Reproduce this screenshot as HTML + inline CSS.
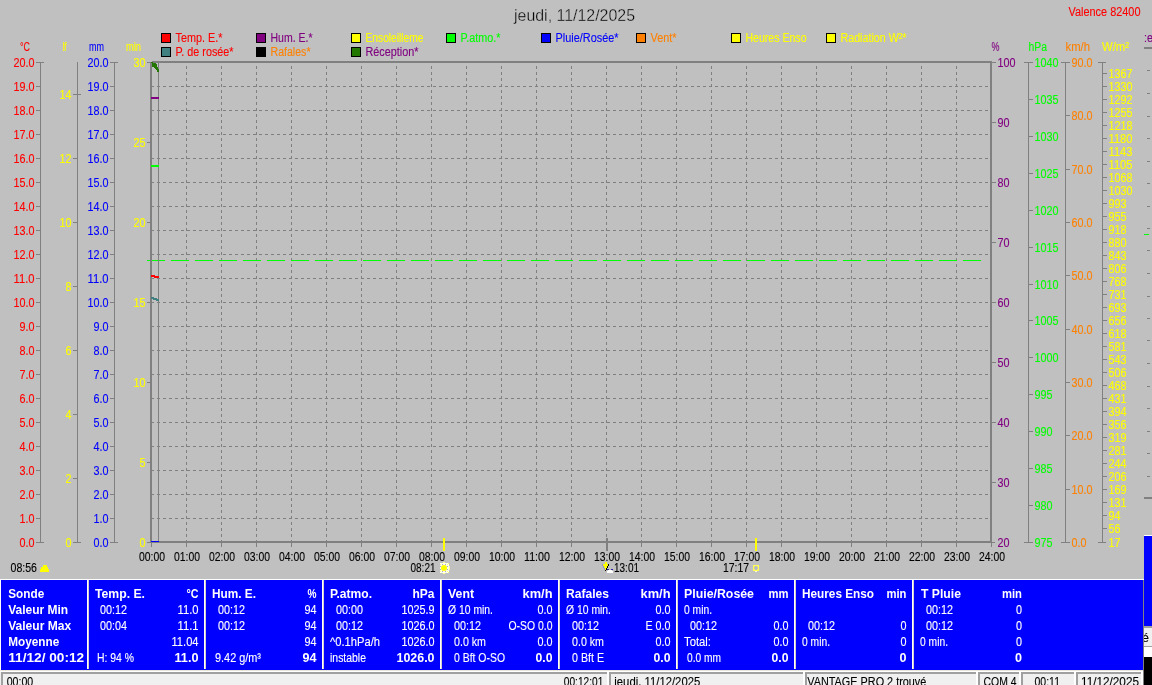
<!DOCTYPE html>
<html lang="fr"><head><meta charset="utf-8"><title>jeudi, 11/12/2025</title>
<style>
html,body{margin:0;padding:0;background:#c0c0c0;overflow:hidden}
svg{display:block;font-family:"Liberation Sans",sans-serif;will-change:transform}
svg rect,svg line,svg path{shape-rendering:crispEdges}
svg text{white-space:pre}
</style></head><body>
<svg width="1152" height="685" viewBox="0 0 1152 685">
<rect x="0" y="0" width="1152" height="685" fill="#c0c0c0"/>
<text x="574.5" y="21" fill="#000" text-anchor="middle" font-size="16" textLength="121" lengthAdjust="spacingAndGlyphs" stroke="#c0c0c0" stroke-width="0.35">jeudi, 11/12/2025</text>
<text x="1140.5" y="16" fill="#ff0000" text-anchor="end" font-size="12.5" stroke="#ff0000" stroke-width="0.12" textLength="72" lengthAdjust="spacingAndGlyphs">Valence 82400</text>
<rect x="161" y="33" width="10" height="10" fill="#000"/>
<rect x="162" y="34" width="8" height="8" fill="#ff0000"/>
<text x="175.5" y="42" fill="#ff0000" text-anchor="start" font-size="12.5" stroke="#ff0000" stroke-width="0.12" textLength="47" lengthAdjust="spacingAndGlyphs">Temp. E.*</text>
<rect x="256" y="33" width="10" height="10" fill="#000"/>
<rect x="257" y="34" width="8" height="8" fill="#800080"/>
<text x="270.5" y="42" fill="#800080" text-anchor="start" font-size="12.5" stroke="#800080" stroke-width="0.12" textLength="42" lengthAdjust="spacingAndGlyphs">Hum. E.*</text>
<rect x="351" y="33" width="10" height="10" fill="#000"/>
<rect x="352" y="34" width="8" height="8" fill="#ffff00"/>
<text x="365.5" y="42" fill="#ffff00" text-anchor="start" font-size="12.5" stroke="#ffff00" stroke-width="0.12" textLength="58" lengthAdjust="spacingAndGlyphs">Ensoleilleme</text>
<rect x="446" y="33" width="10" height="10" fill="#000"/>
<rect x="447" y="34" width="8" height="8" fill="#00ff00"/>
<text x="460.5" y="42" fill="#00ff00" text-anchor="start" font-size="12.5" stroke="#00ff00" stroke-width="0.12" textLength="40" lengthAdjust="spacingAndGlyphs">P.atmo.*</text>
<rect x="541" y="33" width="10" height="10" fill="#000"/>
<rect x="542" y="34" width="8" height="8" fill="#0000ff"/>
<text x="555.5" y="42" fill="#0000ff" text-anchor="start" font-size="12.5" stroke="#0000ff" stroke-width="0.12" textLength="63" lengthAdjust="spacingAndGlyphs">Pluie/Rosée*</text>
<rect x="636" y="33" width="10" height="10" fill="#000"/>
<rect x="637" y="34" width="8" height="8" fill="#ff8000"/>
<text x="650.5" y="42" fill="#ff8000" text-anchor="start" font-size="12.5" stroke="#ff8000" stroke-width="0.12" textLength="26" lengthAdjust="spacingAndGlyphs">Vent*</text>
<rect x="731" y="33" width="10" height="10" fill="#000"/>
<rect x="732" y="34" width="8" height="8" fill="#ffff00"/>
<text x="745.5" y="42" fill="#ffff00" text-anchor="start" font-size="12.5" stroke="#ffff00" stroke-width="0.12" textLength="61" lengthAdjust="spacingAndGlyphs">Heures Enso</text>
<rect x="826" y="33" width="10" height="10" fill="#000"/>
<rect x="827" y="34" width="8" height="8" fill="#ffff00"/>
<text x="840.5" y="42" fill="#ffff00" text-anchor="start" font-size="12.5" stroke="#ffff00" stroke-width="0.12" textLength="66" lengthAdjust="spacingAndGlyphs">Radiation W²*</text>
<rect x="161" y="47" width="10" height="10" fill="#000"/>
<rect x="162" y="48" width="8" height="8" fill="#408080"/>
<text x="175.5" y="56" fill="#ff0000" text-anchor="start" font-size="12.5" stroke="#ff0000" stroke-width="0.12" textLength="58" lengthAdjust="spacingAndGlyphs">P. de rosée*</text>
<rect x="256" y="47" width="10" height="10" fill="#000"/>
<rect x="257" y="48" width="8" height="8" fill="#000000"/>
<text x="270.5" y="56" fill="#ff8000" text-anchor="start" font-size="12.5" stroke="#ff8000" stroke-width="0.12" textLength="40" lengthAdjust="spacingAndGlyphs">Rafales*</text>
<rect x="351" y="47" width="10" height="10" fill="#000"/>
<rect x="352" y="48" width="8" height="8" fill="#227800"/>
<text x="365.5" y="56" fill="#800080" text-anchor="start" font-size="12.5" stroke="#800080" stroke-width="0.12" textLength="53" lengthAdjust="spacingAndGlyphs">Réception*</text>
<line x1="151" y1="86.5" x2="990" y2="86.5" stroke="#808080" stroke-width="1" stroke-dasharray="3 3"/>
<line x1="151" y1="110.5" x2="990" y2="110.5" stroke="#808080" stroke-width="1" stroke-dasharray="3 3"/>
<line x1="151" y1="134.5" x2="990" y2="134.5" stroke="#808080" stroke-width="1" stroke-dasharray="3 3"/>
<line x1="151" y1="158.5" x2="990" y2="158.5" stroke="#808080" stroke-width="1" stroke-dasharray="3 3"/>
<line x1="151" y1="182.5" x2="990" y2="182.5" stroke="#808080" stroke-width="1" stroke-dasharray="3 3"/>
<line x1="151" y1="206.5" x2="990" y2="206.5" stroke="#808080" stroke-width="1" stroke-dasharray="3 3"/>
<line x1="151" y1="230.5" x2="990" y2="230.5" stroke="#808080" stroke-width="1" stroke-dasharray="3 3"/>
<line x1="151" y1="254.5" x2="990" y2="254.5" stroke="#808080" stroke-width="1" stroke-dasharray="3 3"/>
<line x1="151" y1="278.5" x2="990" y2="278.5" stroke="#808080" stroke-width="1" stroke-dasharray="3 3"/>
<line x1="151" y1="302.5" x2="990" y2="302.5" stroke="#808080" stroke-width="1" stroke-dasharray="3 3"/>
<line x1="151" y1="326.5" x2="990" y2="326.5" stroke="#808080" stroke-width="1" stroke-dasharray="3 3"/>
<line x1="151" y1="350.5" x2="990" y2="350.5" stroke="#808080" stroke-width="1" stroke-dasharray="3 3"/>
<line x1="151" y1="374.5" x2="990" y2="374.5" stroke="#808080" stroke-width="1" stroke-dasharray="3 3"/>
<line x1="151" y1="398.5" x2="990" y2="398.5" stroke="#808080" stroke-width="1" stroke-dasharray="3 3"/>
<line x1="151" y1="422.5" x2="990" y2="422.5" stroke="#808080" stroke-width="1" stroke-dasharray="3 3"/>
<line x1="151" y1="446.5" x2="990" y2="446.5" stroke="#808080" stroke-width="1" stroke-dasharray="3 3"/>
<line x1="151" y1="470.5" x2="990" y2="470.5" stroke="#808080" stroke-width="1" stroke-dasharray="3 3"/>
<line x1="151" y1="494.5" x2="990" y2="494.5" stroke="#808080" stroke-width="1" stroke-dasharray="3 3"/>
<line x1="151" y1="518.5" x2="990" y2="518.5" stroke="#808080" stroke-width="1" stroke-dasharray="3 3"/>
<line x1="186.5" y1="543" x2="186.5" y2="62" stroke="#808080" stroke-width="1" stroke-dasharray="3 3"/>
<line x1="221.5" y1="543" x2="221.5" y2="62" stroke="#808080" stroke-width="1" stroke-dasharray="3 3"/>
<line x1="256.5" y1="543" x2="256.5" y2="62" stroke="#808080" stroke-width="1" stroke-dasharray="3 3"/>
<line x1="291.5" y1="543" x2="291.5" y2="62" stroke="#808080" stroke-width="1" stroke-dasharray="3 3"/>
<line x1="326.5" y1="543" x2="326.5" y2="62" stroke="#808080" stroke-width="1" stroke-dasharray="3 3"/>
<line x1="361.5" y1="543" x2="361.5" y2="62" stroke="#808080" stroke-width="1" stroke-dasharray="3 3"/>
<line x1="396.5" y1="543" x2="396.5" y2="62" stroke="#808080" stroke-width="1" stroke-dasharray="3 3"/>
<line x1="431.5" y1="543" x2="431.5" y2="62" stroke="#808080" stroke-width="1" stroke-dasharray="3 3"/>
<line x1="466.5" y1="543" x2="466.5" y2="62" stroke="#808080" stroke-width="1" stroke-dasharray="3 3"/>
<line x1="501.5" y1="543" x2="501.5" y2="62" stroke="#808080" stroke-width="1" stroke-dasharray="3 3"/>
<line x1="536.5" y1="543" x2="536.5" y2="62" stroke="#808080" stroke-width="1" stroke-dasharray="3 3"/>
<line x1="571.5" y1="543" x2="571.5" y2="62" stroke="#808080" stroke-width="1" stroke-dasharray="3 3"/>
<line x1="606.5" y1="543" x2="606.5" y2="62" stroke="#808080" stroke-width="1" stroke-dasharray="3 3"/>
<line x1="641.5" y1="543" x2="641.5" y2="62" stroke="#808080" stroke-width="1" stroke-dasharray="3 3"/>
<line x1="676.5" y1="543" x2="676.5" y2="62" stroke="#808080" stroke-width="1" stroke-dasharray="3 3"/>
<line x1="711.5" y1="543" x2="711.5" y2="62" stroke="#808080" stroke-width="1" stroke-dasharray="3 3"/>
<line x1="746.5" y1="543" x2="746.5" y2="62" stroke="#808080" stroke-width="1" stroke-dasharray="3 3"/>
<line x1="781.5" y1="543" x2="781.5" y2="62" stroke="#808080" stroke-width="1" stroke-dasharray="3 3"/>
<line x1="816.5" y1="543" x2="816.5" y2="62" stroke="#808080" stroke-width="1" stroke-dasharray="3 3"/>
<line x1="851.5" y1="543" x2="851.5" y2="62" stroke="#808080" stroke-width="1" stroke-dasharray="3 3"/>
<line x1="886.5" y1="543" x2="886.5" y2="62" stroke="#808080" stroke-width="1" stroke-dasharray="3 3"/>
<line x1="921.5" y1="543" x2="921.5" y2="62" stroke="#808080" stroke-width="1" stroke-dasharray="3 3"/>
<line x1="956.5" y1="543" x2="956.5" y2="62" stroke="#808080" stroke-width="1" stroke-dasharray="3 3"/>
<line x1="147" y1="260.5" x2="981" y2="260.5" stroke="#00ff00" stroke-width="1" stroke-dasharray="18 6"/>
<rect x="152" y="61" width="840" height="1" fill="#808080"/>
<rect x="150" y="62" width="842" height="1" fill="#808080"/>
<rect x="150" y="541" width="842" height="2" fill="#808080"/>
<rect x="150" y="62" width="2" height="481" fill="#808080"/>
<rect x="990" y="61" width="2" height="482" fill="#808080"/>
<rect x="158" y="62" width="1" height="481" fill="#808080"/>
<rect x="151" y="543" width="1" height="4" fill="#808080"/>
<text x="152" y="561" fill="#000" text-anchor="middle" font-size="12.5" stroke="#000" stroke-width="0.12" textLength="26" lengthAdjust="spacingAndGlyphs">00:00</text>
<rect x="186" y="543" width="1" height="4" fill="#808080"/>
<text x="187" y="561" fill="#000" text-anchor="middle" font-size="12.5" stroke="#000" stroke-width="0.12" textLength="26" lengthAdjust="spacingAndGlyphs">01:00</text>
<rect x="221" y="543" width="1" height="4" fill="#808080"/>
<text x="222" y="561" fill="#000" text-anchor="middle" font-size="12.5" stroke="#000" stroke-width="0.12" textLength="26" lengthAdjust="spacingAndGlyphs">02:00</text>
<rect x="256" y="543" width="1" height="4" fill="#808080"/>
<text x="257" y="561" fill="#000" text-anchor="middle" font-size="12.5" stroke="#000" stroke-width="0.12" textLength="26" lengthAdjust="spacingAndGlyphs">03:00</text>
<rect x="291" y="543" width="1" height="4" fill="#808080"/>
<text x="292" y="561" fill="#000" text-anchor="middle" font-size="12.5" stroke="#000" stroke-width="0.12" textLength="26" lengthAdjust="spacingAndGlyphs">04:00</text>
<rect x="326" y="543" width="1" height="4" fill="#808080"/>
<text x="327" y="561" fill="#000" text-anchor="middle" font-size="12.5" stroke="#000" stroke-width="0.12" textLength="26" lengthAdjust="spacingAndGlyphs">05:00</text>
<rect x="361" y="543" width="1" height="4" fill="#808080"/>
<text x="362" y="561" fill="#000" text-anchor="middle" font-size="12.5" stroke="#000" stroke-width="0.12" textLength="26" lengthAdjust="spacingAndGlyphs">06:00</text>
<rect x="396" y="543" width="1" height="4" fill="#808080"/>
<text x="397" y="561" fill="#000" text-anchor="middle" font-size="12.5" stroke="#000" stroke-width="0.12" textLength="26" lengthAdjust="spacingAndGlyphs">07:00</text>
<rect x="431" y="543" width="1" height="4" fill="#808080"/>
<text x="432" y="561" fill="#000" text-anchor="middle" font-size="12.5" stroke="#000" stroke-width="0.12" textLength="26" lengthAdjust="spacingAndGlyphs">08:00</text>
<rect x="466" y="543" width="1" height="4" fill="#808080"/>
<text x="467" y="561" fill="#000" text-anchor="middle" font-size="12.5" stroke="#000" stroke-width="0.12" textLength="26" lengthAdjust="spacingAndGlyphs">09:00</text>
<rect x="501" y="543" width="1" height="4" fill="#808080"/>
<text x="502" y="561" fill="#000" text-anchor="middle" font-size="12.5" stroke="#000" stroke-width="0.12" textLength="26" lengthAdjust="spacingAndGlyphs">10:00</text>
<rect x="536" y="543" width="1" height="4" fill="#808080"/>
<text x="537" y="561" fill="#000" text-anchor="middle" font-size="12.5" stroke="#000" stroke-width="0.12" textLength="26" lengthAdjust="spacingAndGlyphs">11:00</text>
<rect x="571" y="543" width="1" height="4" fill="#808080"/>
<text x="572" y="561" fill="#000" text-anchor="middle" font-size="12.5" stroke="#000" stroke-width="0.12" textLength="26" lengthAdjust="spacingAndGlyphs">12:00</text>
<rect x="606" y="543" width="1" height="4" fill="#808080"/>
<text x="607" y="561" fill="#000" text-anchor="middle" font-size="12.5" stroke="#000" stroke-width="0.12" textLength="26" lengthAdjust="spacingAndGlyphs">13:00</text>
<rect x="641" y="543" width="1" height="4" fill="#808080"/>
<text x="642" y="561" fill="#000" text-anchor="middle" font-size="12.5" stroke="#000" stroke-width="0.12" textLength="26" lengthAdjust="spacingAndGlyphs">14:00</text>
<rect x="676" y="543" width="1" height="4" fill="#808080"/>
<text x="677" y="561" fill="#000" text-anchor="middle" font-size="12.5" stroke="#000" stroke-width="0.12" textLength="26" lengthAdjust="spacingAndGlyphs">15:00</text>
<rect x="711" y="543" width="1" height="4" fill="#808080"/>
<text x="712" y="561" fill="#000" text-anchor="middle" font-size="12.5" stroke="#000" stroke-width="0.12" textLength="26" lengthAdjust="spacingAndGlyphs">16:00</text>
<rect x="746" y="543" width="1" height="4" fill="#808080"/>
<text x="747" y="561" fill="#000" text-anchor="middle" font-size="12.5" stroke="#000" stroke-width="0.12" textLength="26" lengthAdjust="spacingAndGlyphs">17:00</text>
<rect x="781" y="543" width="1" height="4" fill="#808080"/>
<text x="782" y="561" fill="#000" text-anchor="middle" font-size="12.5" stroke="#000" stroke-width="0.12" textLength="26" lengthAdjust="spacingAndGlyphs">18:00</text>
<rect x="816" y="543" width="1" height="4" fill="#808080"/>
<text x="817" y="561" fill="#000" text-anchor="middle" font-size="12.5" stroke="#000" stroke-width="0.12" textLength="26" lengthAdjust="spacingAndGlyphs">19:00</text>
<rect x="851" y="543" width="1" height="4" fill="#808080"/>
<text x="852" y="561" fill="#000" text-anchor="middle" font-size="12.5" stroke="#000" stroke-width="0.12" textLength="26" lengthAdjust="spacingAndGlyphs">20:00</text>
<rect x="886" y="543" width="1" height="4" fill="#808080"/>
<text x="887" y="561" fill="#000" text-anchor="middle" font-size="12.5" stroke="#000" stroke-width="0.12" textLength="26" lengthAdjust="spacingAndGlyphs">21:00</text>
<rect x="921" y="543" width="1" height="4" fill="#808080"/>
<text x="922" y="561" fill="#000" text-anchor="middle" font-size="12.5" stroke="#000" stroke-width="0.12" textLength="26" lengthAdjust="spacingAndGlyphs">22:00</text>
<rect x="956" y="543" width="1" height="4" fill="#808080"/>
<text x="957" y="561" fill="#000" text-anchor="middle" font-size="12.5" stroke="#000" stroke-width="0.12" textLength="26" lengthAdjust="spacingAndGlyphs">23:00</text>
<rect x="991" y="543" width="1" height="4" fill="#808080"/>
<text x="992" y="561" fill="#000" text-anchor="middle" font-size="12.5" stroke="#000" stroke-width="0.12" textLength="26" lengthAdjust="spacingAndGlyphs">24:00</text>
<rect x="151" y="62" width="2" height="1" fill="#227800"/>
<rect x="152" y="63" width="4" height="1" fill="#227800"/>
<rect x="152" y="64" width="5" height="1" fill="#227800"/>
<rect x="152" y="65" width="5" height="1" fill="#227800"/>
<rect x="152" y="66" width="5" height="1" fill="#227800"/>
<rect x="154" y="67" width="4" height="1" fill="#227800"/>
<rect x="155" y="68" width="3" height="1" fill="#227800"/>
<rect x="156" y="69" width="3" height="1" fill="#227800"/>
<rect x="157" y="70" width="2" height="1" fill="#227800"/>
<rect x="157" y="71" width="2" height="1" fill="#227800"/>
<rect x="151" y="97" width="8" height="2" fill="#800080"/>
<rect x="151" y="165" width="8" height="2" fill="#00ff00"/>
<rect x="151" y="275" width="4" height="2" fill="#ff0000"/>
<rect x="154" y="276" width="5" height="2" fill="#ff0000"/>
<rect x="151" y="297" width="3" height="2" fill="#408080"/>
<rect x="153" y="298" width="4" height="2" fill="#408080"/>
<rect x="156" y="299" width="3" height="2" fill="#408080"/>
<rect x="151" y="541" width="8" height="1" fill="#0000ff"/>
<rect x="40" y="62" width="1" height="481" fill="#808080"/>
<rect x="36" y="62" width="5" height="1" fill="#808080"/>
<text x="34.5" y="67" fill="#ff0000" text-anchor="end" font-size="12.5" stroke="#ff0000" stroke-width="0.12" textLength="21" lengthAdjust="spacingAndGlyphs">20.0</text>
<rect x="36" y="86" width="5" height="1" fill="#808080"/>
<text x="34.5" y="91" fill="#ff0000" text-anchor="end" font-size="12.5" stroke="#ff0000" stroke-width="0.12" textLength="21" lengthAdjust="spacingAndGlyphs">19.0</text>
<rect x="36" y="110" width="5" height="1" fill="#808080"/>
<text x="34.5" y="115" fill="#ff0000" text-anchor="end" font-size="12.5" stroke="#ff0000" stroke-width="0.12" textLength="21" lengthAdjust="spacingAndGlyphs">18.0</text>
<rect x="36" y="134" width="5" height="1" fill="#808080"/>
<text x="34.5" y="139" fill="#ff0000" text-anchor="end" font-size="12.5" stroke="#ff0000" stroke-width="0.12" textLength="21" lengthAdjust="spacingAndGlyphs">17.0</text>
<rect x="36" y="158" width="5" height="1" fill="#808080"/>
<text x="34.5" y="163" fill="#ff0000" text-anchor="end" font-size="12.5" stroke="#ff0000" stroke-width="0.12" textLength="21" lengthAdjust="spacingAndGlyphs">16.0</text>
<rect x="36" y="182" width="5" height="1" fill="#808080"/>
<text x="34.5" y="187" fill="#ff0000" text-anchor="end" font-size="12.5" stroke="#ff0000" stroke-width="0.12" textLength="21" lengthAdjust="spacingAndGlyphs">15.0</text>
<rect x="36" y="206" width="5" height="1" fill="#808080"/>
<text x="34.5" y="211" fill="#ff0000" text-anchor="end" font-size="12.5" stroke="#ff0000" stroke-width="0.12" textLength="21" lengthAdjust="spacingAndGlyphs">14.0</text>
<rect x="36" y="230" width="5" height="1" fill="#808080"/>
<text x="34.5" y="235" fill="#ff0000" text-anchor="end" font-size="12.5" stroke="#ff0000" stroke-width="0.12" textLength="21" lengthAdjust="spacingAndGlyphs">13.0</text>
<rect x="36" y="254" width="5" height="1" fill="#808080"/>
<text x="34.5" y="259" fill="#ff0000" text-anchor="end" font-size="12.5" stroke="#ff0000" stroke-width="0.12" textLength="21" lengthAdjust="spacingAndGlyphs">12.0</text>
<rect x="36" y="278" width="5" height="1" fill="#808080"/>
<text x="34.5" y="283" fill="#ff0000" text-anchor="end" font-size="12.5" stroke="#ff0000" stroke-width="0.12" textLength="21" lengthAdjust="spacingAndGlyphs">11.0</text>
<rect x="36" y="302" width="5" height="1" fill="#808080"/>
<text x="34.5" y="307" fill="#ff0000" text-anchor="end" font-size="12.5" stroke="#ff0000" stroke-width="0.12" textLength="21" lengthAdjust="spacingAndGlyphs">10.0</text>
<rect x="36" y="326" width="5" height="1" fill="#808080"/>
<text x="34.5" y="331" fill="#ff0000" text-anchor="end" font-size="12.5" stroke="#ff0000" stroke-width="0.12" textLength="15" lengthAdjust="spacingAndGlyphs">9.0</text>
<rect x="36" y="350" width="5" height="1" fill="#808080"/>
<text x="34.5" y="355" fill="#ff0000" text-anchor="end" font-size="12.5" stroke="#ff0000" stroke-width="0.12" textLength="15" lengthAdjust="spacingAndGlyphs">8.0</text>
<rect x="36" y="374" width="5" height="1" fill="#808080"/>
<text x="34.5" y="379" fill="#ff0000" text-anchor="end" font-size="12.5" stroke="#ff0000" stroke-width="0.12" textLength="15" lengthAdjust="spacingAndGlyphs">7.0</text>
<rect x="36" y="398" width="5" height="1" fill="#808080"/>
<text x="34.5" y="403" fill="#ff0000" text-anchor="end" font-size="12.5" stroke="#ff0000" stroke-width="0.12" textLength="15" lengthAdjust="spacingAndGlyphs">6.0</text>
<rect x="36" y="422" width="5" height="1" fill="#808080"/>
<text x="34.5" y="427" fill="#ff0000" text-anchor="end" font-size="12.5" stroke="#ff0000" stroke-width="0.12" textLength="15" lengthAdjust="spacingAndGlyphs">5.0</text>
<rect x="36" y="446" width="5" height="1" fill="#808080"/>
<text x="34.5" y="451" fill="#ff0000" text-anchor="end" font-size="12.5" stroke="#ff0000" stroke-width="0.12" textLength="15" lengthAdjust="spacingAndGlyphs">4.0</text>
<rect x="36" y="470" width="5" height="1" fill="#808080"/>
<text x="34.5" y="475" fill="#ff0000" text-anchor="end" font-size="12.5" stroke="#ff0000" stroke-width="0.12" textLength="15" lengthAdjust="spacingAndGlyphs">3.0</text>
<rect x="36" y="494" width="5" height="1" fill="#808080"/>
<text x="34.5" y="499" fill="#ff0000" text-anchor="end" font-size="12.5" stroke="#ff0000" stroke-width="0.12" textLength="15" lengthAdjust="spacingAndGlyphs">2.0</text>
<rect x="36" y="518" width="5" height="1" fill="#808080"/>
<text x="34.5" y="523" fill="#ff0000" text-anchor="end" font-size="12.5" stroke="#ff0000" stroke-width="0.12" textLength="15" lengthAdjust="spacingAndGlyphs">1.0</text>
<rect x="36" y="542" width="5" height="1" fill="#808080"/>
<text x="34.5" y="547" fill="#ff0000" text-anchor="end" font-size="12.5" stroke="#ff0000" stroke-width="0.12" textLength="15" lengthAdjust="spacingAndGlyphs">0.0</text>
<rect x="36" y="62" width="8" height="1" fill="#808080"/>
<rect x="36" y="542" width="8" height="1" fill="#808080"/>
<rect x="77" y="62" width="1" height="481" fill="#808080"/>
<rect x="73" y="542" width="8" height="1" fill="#808080"/>
<text x="71.5" y="547" fill="#ffff00" text-anchor="end" font-size="12.5" stroke="#ffff00" stroke-width="0.12" textLength="6" lengthAdjust="spacingAndGlyphs">0</text>
<rect x="73" y="478" width="5" height="1" fill="#808080"/>
<text x="71.5" y="483" fill="#ffff00" text-anchor="end" font-size="12.5" stroke="#ffff00" stroke-width="0.12" textLength="6" lengthAdjust="spacingAndGlyphs">2</text>
<rect x="73" y="414" width="5" height="1" fill="#808080"/>
<text x="71.5" y="419" fill="#ffff00" text-anchor="end" font-size="12.5" stroke="#ffff00" stroke-width="0.12" textLength="6" lengthAdjust="spacingAndGlyphs">4</text>
<rect x="73" y="350" width="5" height="1" fill="#808080"/>
<text x="71.5" y="355" fill="#ffff00" text-anchor="end" font-size="12.5" stroke="#ffff00" stroke-width="0.12" textLength="6" lengthAdjust="spacingAndGlyphs">6</text>
<rect x="73" y="286" width="5" height="1" fill="#808080"/>
<text x="71.5" y="291" fill="#ffff00" text-anchor="end" font-size="12.5" stroke="#ffff00" stroke-width="0.12" textLength="6" lengthAdjust="spacingAndGlyphs">8</text>
<rect x="73" y="222" width="5" height="1" fill="#808080"/>
<text x="71.5" y="227" fill="#ffff00" text-anchor="end" font-size="12.5" stroke="#ffff00" stroke-width="0.12" textLength="12" lengthAdjust="spacingAndGlyphs">10</text>
<rect x="73" y="158" width="5" height="1" fill="#808080"/>
<text x="71.5" y="163" fill="#ffff00" text-anchor="end" font-size="12.5" stroke="#ffff00" stroke-width="0.12" textLength="12" lengthAdjust="spacingAndGlyphs">12</text>
<rect x="73" y="94" width="8" height="1" fill="#808080"/>
<text x="71.5" y="99" fill="#ffff00" text-anchor="end" font-size="12.5" stroke="#ffff00" stroke-width="0.12" textLength="12" lengthAdjust="spacingAndGlyphs">14</text>
<rect x="114" y="62" width="1" height="481" fill="#808080"/>
<rect x="110" y="62" width="5" height="1" fill="#808080"/>
<text x="108.5" y="67" fill="#0000ff" text-anchor="end" font-size="12.5" stroke="#0000ff" stroke-width="0.12" textLength="21" lengthAdjust="spacingAndGlyphs">20.0</text>
<rect x="110" y="86" width="5" height="1" fill="#808080"/>
<text x="108.5" y="91" fill="#0000ff" text-anchor="end" font-size="12.5" stroke="#0000ff" stroke-width="0.12" textLength="21" lengthAdjust="spacingAndGlyphs">19.0</text>
<rect x="110" y="110" width="5" height="1" fill="#808080"/>
<text x="108.5" y="115" fill="#0000ff" text-anchor="end" font-size="12.5" stroke="#0000ff" stroke-width="0.12" textLength="21" lengthAdjust="spacingAndGlyphs">18.0</text>
<rect x="110" y="134" width="5" height="1" fill="#808080"/>
<text x="108.5" y="139" fill="#0000ff" text-anchor="end" font-size="12.5" stroke="#0000ff" stroke-width="0.12" textLength="21" lengthAdjust="spacingAndGlyphs">17.0</text>
<rect x="110" y="158" width="5" height="1" fill="#808080"/>
<text x="108.5" y="163" fill="#0000ff" text-anchor="end" font-size="12.5" stroke="#0000ff" stroke-width="0.12" textLength="21" lengthAdjust="spacingAndGlyphs">16.0</text>
<rect x="110" y="182" width="5" height="1" fill="#808080"/>
<text x="108.5" y="187" fill="#0000ff" text-anchor="end" font-size="12.5" stroke="#0000ff" stroke-width="0.12" textLength="21" lengthAdjust="spacingAndGlyphs">15.0</text>
<rect x="110" y="206" width="5" height="1" fill="#808080"/>
<text x="108.5" y="211" fill="#0000ff" text-anchor="end" font-size="12.5" stroke="#0000ff" stroke-width="0.12" textLength="21" lengthAdjust="spacingAndGlyphs">14.0</text>
<rect x="110" y="230" width="5" height="1" fill="#808080"/>
<text x="108.5" y="235" fill="#0000ff" text-anchor="end" font-size="12.5" stroke="#0000ff" stroke-width="0.12" textLength="21" lengthAdjust="spacingAndGlyphs">13.0</text>
<rect x="110" y="254" width="5" height="1" fill="#808080"/>
<text x="108.5" y="259" fill="#0000ff" text-anchor="end" font-size="12.5" stroke="#0000ff" stroke-width="0.12" textLength="21" lengthAdjust="spacingAndGlyphs">12.0</text>
<rect x="110" y="278" width="5" height="1" fill="#808080"/>
<text x="108.5" y="283" fill="#0000ff" text-anchor="end" font-size="12.5" stroke="#0000ff" stroke-width="0.12" textLength="21" lengthAdjust="spacingAndGlyphs">11.0</text>
<rect x="110" y="302" width="5" height="1" fill="#808080"/>
<text x="108.5" y="307" fill="#0000ff" text-anchor="end" font-size="12.5" stroke="#0000ff" stroke-width="0.12" textLength="21" lengthAdjust="spacingAndGlyphs">10.0</text>
<rect x="110" y="326" width="5" height="1" fill="#808080"/>
<text x="108.5" y="331" fill="#0000ff" text-anchor="end" font-size="12.5" stroke="#0000ff" stroke-width="0.12" textLength="15" lengthAdjust="spacingAndGlyphs">9.0</text>
<rect x="110" y="350" width="5" height="1" fill="#808080"/>
<text x="108.5" y="355" fill="#0000ff" text-anchor="end" font-size="12.5" stroke="#0000ff" stroke-width="0.12" textLength="15" lengthAdjust="spacingAndGlyphs">8.0</text>
<rect x="110" y="374" width="5" height="1" fill="#808080"/>
<text x="108.5" y="379" fill="#0000ff" text-anchor="end" font-size="12.5" stroke="#0000ff" stroke-width="0.12" textLength="15" lengthAdjust="spacingAndGlyphs">7.0</text>
<rect x="110" y="398" width="5" height="1" fill="#808080"/>
<text x="108.5" y="403" fill="#0000ff" text-anchor="end" font-size="12.5" stroke="#0000ff" stroke-width="0.12" textLength="15" lengthAdjust="spacingAndGlyphs">6.0</text>
<rect x="110" y="422" width="5" height="1" fill="#808080"/>
<text x="108.5" y="427" fill="#0000ff" text-anchor="end" font-size="12.5" stroke="#0000ff" stroke-width="0.12" textLength="15" lengthAdjust="spacingAndGlyphs">5.0</text>
<rect x="110" y="446" width="5" height="1" fill="#808080"/>
<text x="108.5" y="451" fill="#0000ff" text-anchor="end" font-size="12.5" stroke="#0000ff" stroke-width="0.12" textLength="15" lengthAdjust="spacingAndGlyphs">4.0</text>
<rect x="110" y="470" width="5" height="1" fill="#808080"/>
<text x="108.5" y="475" fill="#0000ff" text-anchor="end" font-size="12.5" stroke="#0000ff" stroke-width="0.12" textLength="15" lengthAdjust="spacingAndGlyphs">3.0</text>
<rect x="110" y="494" width="5" height="1" fill="#808080"/>
<text x="108.5" y="499" fill="#0000ff" text-anchor="end" font-size="12.5" stroke="#0000ff" stroke-width="0.12" textLength="15" lengthAdjust="spacingAndGlyphs">2.0</text>
<rect x="110" y="518" width="5" height="1" fill="#808080"/>
<text x="108.5" y="523" fill="#0000ff" text-anchor="end" font-size="12.5" stroke="#0000ff" stroke-width="0.12" textLength="15" lengthAdjust="spacingAndGlyphs">1.0</text>
<rect x="110" y="542" width="5" height="1" fill="#808080"/>
<text x="108.5" y="547" fill="#0000ff" text-anchor="end" font-size="12.5" stroke="#0000ff" stroke-width="0.12" textLength="15" lengthAdjust="spacingAndGlyphs">0.0</text>
<rect x="110" y="62" width="8" height="1" fill="#808080"/>
<rect x="110" y="542" width="8" height="1" fill="#808080"/>
<rect x="147" y="62" width="4" height="1" fill="#808080"/>
<text x="145.5" y="67" fill="#ffff00" text-anchor="end" font-size="12.5" stroke="#ffff00" stroke-width="0.12" textLength="12" lengthAdjust="spacingAndGlyphs">30</text>
<rect x="147" y="142" width="4" height="1" fill="#808080"/>
<text x="145.5" y="147" fill="#ffff00" text-anchor="end" font-size="12.5" stroke="#ffff00" stroke-width="0.12" textLength="12" lengthAdjust="spacingAndGlyphs">25</text>
<rect x="147" y="222" width="4" height="1" fill="#808080"/>
<text x="145.5" y="227" fill="#ffff00" text-anchor="end" font-size="12.5" stroke="#ffff00" stroke-width="0.12" textLength="12" lengthAdjust="spacingAndGlyphs">20</text>
<rect x="147" y="302" width="4" height="1" fill="#808080"/>
<text x="145.5" y="307" fill="#ffff00" text-anchor="end" font-size="12.5" stroke="#ffff00" stroke-width="0.12" textLength="12" lengthAdjust="spacingAndGlyphs">15</text>
<rect x="147" y="382" width="4" height="1" fill="#808080"/>
<text x="145.5" y="387" fill="#ffff00" text-anchor="end" font-size="12.5" stroke="#ffff00" stroke-width="0.12" textLength="12" lengthAdjust="spacingAndGlyphs">10</text>
<rect x="147" y="462" width="4" height="1" fill="#808080"/>
<text x="145.5" y="467" fill="#ffff00" text-anchor="end" font-size="12.5" stroke="#ffff00" stroke-width="0.12" textLength="6" lengthAdjust="spacingAndGlyphs">5</text>
<rect x="147" y="542" width="4" height="1" fill="#808080"/>
<text x="145.5" y="547" fill="#ffff00" text-anchor="end" font-size="12.5" stroke="#ffff00" stroke-width="0.12" textLength="6" lengthAdjust="spacingAndGlyphs">0</text>
<text x="25" y="51" fill="#ff0000" text-anchor="middle" font-size="12.5" stroke="#ff0000" stroke-width="0.12" textLength="10" lengthAdjust="spacingAndGlyphs">°C</text>
<text x="64.5" y="51" fill="#ffff00" text-anchor="middle" font-size="12.5" stroke="#ffff00" stroke-width="0.12" textLength="4" lengthAdjust="spacingAndGlyphs">lf</text>
<text x="96.5" y="51" fill="#0000ff" text-anchor="middle" font-size="12.5" stroke="#0000ff" stroke-width="0.12" textLength="15" lengthAdjust="spacingAndGlyphs">mm</text>
<text x="133.5" y="51" fill="#ffff00" text-anchor="middle" font-size="12.5" stroke="#ffff00" stroke-width="0.12" textLength="15" lengthAdjust="spacingAndGlyphs">min</text>
<rect x="992" y="62" width="4" height="1" fill="#808080"/>
<text x="997.5" y="67" fill="#800080" text-anchor="start" font-size="12.5" stroke="#800080" stroke-width="0.12" textLength="18" lengthAdjust="spacingAndGlyphs">100</text>
<rect x="992" y="122" width="4" height="1" fill="#808080"/>
<text x="997.5" y="127" fill="#800080" text-anchor="start" font-size="12.5" stroke="#800080" stroke-width="0.12" textLength="12" lengthAdjust="spacingAndGlyphs">90</text>
<rect x="992" y="182" width="4" height="1" fill="#808080"/>
<text x="997.5" y="187" fill="#800080" text-anchor="start" font-size="12.5" stroke="#800080" stroke-width="0.12" textLength="12" lengthAdjust="spacingAndGlyphs">80</text>
<rect x="992" y="242" width="4" height="1" fill="#808080"/>
<text x="997.5" y="247" fill="#800080" text-anchor="start" font-size="12.5" stroke="#800080" stroke-width="0.12" textLength="12" lengthAdjust="spacingAndGlyphs">70</text>
<rect x="992" y="302" width="4" height="1" fill="#808080"/>
<text x="997.5" y="307" fill="#800080" text-anchor="start" font-size="12.5" stroke="#800080" stroke-width="0.12" textLength="12" lengthAdjust="spacingAndGlyphs">60</text>
<rect x="992" y="362" width="4" height="1" fill="#808080"/>
<text x="997.5" y="367" fill="#800080" text-anchor="start" font-size="12.5" stroke="#800080" stroke-width="0.12" textLength="12" lengthAdjust="spacingAndGlyphs">50</text>
<rect x="992" y="422" width="4" height="1" fill="#808080"/>
<text x="997.5" y="427" fill="#800080" text-anchor="start" font-size="12.5" stroke="#800080" stroke-width="0.12" textLength="12" lengthAdjust="spacingAndGlyphs">40</text>
<rect x="992" y="482" width="4" height="1" fill="#808080"/>
<text x="997.5" y="487" fill="#800080" text-anchor="start" font-size="12.5" stroke="#800080" stroke-width="0.12" textLength="12" lengthAdjust="spacingAndGlyphs">30</text>
<rect x="992" y="542" width="3" height="1" fill="#808080"/>
<text x="997.5" y="547" fill="#800080" text-anchor="start" font-size="12.5" stroke="#800080" stroke-width="0.12" textLength="12" lengthAdjust="spacingAndGlyphs">20</text>
<rect x="1028" y="62" width="1" height="481" fill="#808080"/>
<rect x="1028" y="62" width="5" height="1" fill="#808080"/>
<text x="1034.5" y="67" fill="#00ff00" text-anchor="start" font-size="12.5" stroke="#00ff00" stroke-width="0.12" textLength="24" lengthAdjust="spacingAndGlyphs">1040</text>
<rect x="1028" y="99" width="5" height="1" fill="#808080"/>
<text x="1034.5" y="104" fill="#00ff00" text-anchor="start" font-size="12.5" stroke="#00ff00" stroke-width="0.12" textLength="24" lengthAdjust="spacingAndGlyphs">1035</text>
<rect x="1028" y="136" width="5" height="1" fill="#808080"/>
<text x="1034.5" y="141" fill="#00ff00" text-anchor="start" font-size="12.5" stroke="#00ff00" stroke-width="0.12" textLength="24" lengthAdjust="spacingAndGlyphs">1030</text>
<rect x="1028" y="173" width="5" height="1" fill="#808080"/>
<text x="1034.5" y="178" fill="#00ff00" text-anchor="start" font-size="12.5" stroke="#00ff00" stroke-width="0.12" textLength="24" lengthAdjust="spacingAndGlyphs">1025</text>
<rect x="1028" y="210" width="5" height="1" fill="#808080"/>
<text x="1034.5" y="215" fill="#00ff00" text-anchor="start" font-size="12.5" stroke="#00ff00" stroke-width="0.12" textLength="24" lengthAdjust="spacingAndGlyphs">1020</text>
<rect x="1028" y="247" width="5" height="1" fill="#808080"/>
<text x="1034.5" y="252" fill="#00ff00" text-anchor="start" font-size="12.5" stroke="#00ff00" stroke-width="0.12" textLength="24" lengthAdjust="spacingAndGlyphs">1015</text>
<rect x="1028" y="284" width="5" height="1" fill="#808080"/>
<text x="1034.5" y="289" fill="#00ff00" text-anchor="start" font-size="12.5" stroke="#00ff00" stroke-width="0.12" textLength="24" lengthAdjust="spacingAndGlyphs">1010</text>
<rect x="1028" y="320" width="5" height="1" fill="#808080"/>
<text x="1034.5" y="325" fill="#00ff00" text-anchor="start" font-size="12.5" stroke="#00ff00" stroke-width="0.12" textLength="24" lengthAdjust="spacingAndGlyphs">1005</text>
<rect x="1028" y="357" width="5" height="1" fill="#808080"/>
<text x="1034.5" y="362" fill="#00ff00" text-anchor="start" font-size="12.5" stroke="#00ff00" stroke-width="0.12" textLength="24" lengthAdjust="spacingAndGlyphs">1000</text>
<rect x="1028" y="394" width="5" height="1" fill="#808080"/>
<text x="1034.5" y="399" fill="#00ff00" text-anchor="start" font-size="12.5" stroke="#00ff00" stroke-width="0.12" textLength="18" lengthAdjust="spacingAndGlyphs">995</text>
<rect x="1028" y="431" width="5" height="1" fill="#808080"/>
<text x="1034.5" y="436" fill="#00ff00" text-anchor="start" font-size="12.5" stroke="#00ff00" stroke-width="0.12" textLength="18" lengthAdjust="spacingAndGlyphs">990</text>
<rect x="1028" y="468" width="5" height="1" fill="#808080"/>
<text x="1034.5" y="473" fill="#00ff00" text-anchor="start" font-size="12.5" stroke="#00ff00" stroke-width="0.12" textLength="18" lengthAdjust="spacingAndGlyphs">985</text>
<rect x="1028" y="505" width="5" height="1" fill="#808080"/>
<text x="1034.5" y="510" fill="#00ff00" text-anchor="start" font-size="12.5" stroke="#00ff00" stroke-width="0.12" textLength="18" lengthAdjust="spacingAndGlyphs">980</text>
<rect x="1028" y="542" width="5" height="1" fill="#808080"/>
<text x="1034.5" y="547" fill="#00ff00" text-anchor="start" font-size="12.5" stroke="#00ff00" stroke-width="0.12" textLength="18" lengthAdjust="spacingAndGlyphs">975</text>
<rect x="1024" y="62" width="9" height="1" fill="#808080"/>
<rect x="1024" y="542" width="8" height="1" fill="#808080"/>
<rect x="1065" y="62" width="1" height="481" fill="#808080"/>
<rect x="1065" y="62" width="5" height="1" fill="#808080"/>
<text x="1071.5" y="67" fill="#ff8000" text-anchor="start" font-size="12.5" stroke="#ff8000" stroke-width="0.12" textLength="21" lengthAdjust="spacingAndGlyphs">90.0</text>
<rect x="1065" y="115" width="5" height="1" fill="#808080"/>
<text x="1071.5" y="120" fill="#ff8000" text-anchor="start" font-size="12.5" stroke="#ff8000" stroke-width="0.12" textLength="21" lengthAdjust="spacingAndGlyphs">80.0</text>
<rect x="1065" y="169" width="5" height="1" fill="#808080"/>
<text x="1071.5" y="174" fill="#ff8000" text-anchor="start" font-size="12.5" stroke="#ff8000" stroke-width="0.12" textLength="21" lengthAdjust="spacingAndGlyphs">70.0</text>
<rect x="1065" y="222" width="5" height="1" fill="#808080"/>
<text x="1071.5" y="227" fill="#ff8000" text-anchor="start" font-size="12.5" stroke="#ff8000" stroke-width="0.12" textLength="21" lengthAdjust="spacingAndGlyphs">60.0</text>
<rect x="1065" y="275" width="5" height="1" fill="#808080"/>
<text x="1071.5" y="280" fill="#ff8000" text-anchor="start" font-size="12.5" stroke="#ff8000" stroke-width="0.12" textLength="21" lengthAdjust="spacingAndGlyphs">50.0</text>
<rect x="1065" y="329" width="5" height="1" fill="#808080"/>
<text x="1071.5" y="334" fill="#ff8000" text-anchor="start" font-size="12.5" stroke="#ff8000" stroke-width="0.12" textLength="21" lengthAdjust="spacingAndGlyphs">40.0</text>
<rect x="1065" y="382" width="5" height="1" fill="#808080"/>
<text x="1071.5" y="387" fill="#ff8000" text-anchor="start" font-size="12.5" stroke="#ff8000" stroke-width="0.12" textLength="21" lengthAdjust="spacingAndGlyphs">30.0</text>
<rect x="1065" y="435" width="5" height="1" fill="#808080"/>
<text x="1071.5" y="440" fill="#ff8000" text-anchor="start" font-size="12.5" stroke="#ff8000" stroke-width="0.12" textLength="21" lengthAdjust="spacingAndGlyphs">20.0</text>
<rect x="1065" y="489" width="5" height="1" fill="#808080"/>
<text x="1071.5" y="494" fill="#ff8000" text-anchor="start" font-size="12.5" stroke="#ff8000" stroke-width="0.12" textLength="21" lengthAdjust="spacingAndGlyphs">10.0</text>
<rect x="1065" y="542" width="5" height="1" fill="#808080"/>
<text x="1071.5" y="547" fill="#ff8000" text-anchor="start" font-size="12.5" stroke="#ff8000" stroke-width="0.12" textLength="15" lengthAdjust="spacingAndGlyphs">0.0</text>
<rect x="1061" y="62" width="9" height="1" fill="#808080"/>
<rect x="1061" y="542" width="8" height="1" fill="#808080"/>
<rect x="1102" y="62" width="1" height="481" fill="#808080"/>
<rect x="1102" y="542" width="4" height="1" fill="#808080"/>
<text x="1108.5" y="547" fill="#ffff00" text-anchor="start" font-size="12.5" stroke="#ffff00" stroke-width="0.12" textLength="12" lengthAdjust="spacingAndGlyphs">17</text>
<rect x="1102" y="528" width="5" height="1" fill="#808080"/>
<text x="1108.5" y="533" fill="#ffff00" text-anchor="start" font-size="12.5" stroke="#ffff00" stroke-width="0.12" textLength="12" lengthAdjust="spacingAndGlyphs">56</text>
<rect x="1102" y="515" width="5" height="1" fill="#808080"/>
<text x="1108.5" y="520" fill="#ffff00" text-anchor="start" font-size="12.5" stroke="#ffff00" stroke-width="0.12" textLength="12" lengthAdjust="spacingAndGlyphs">94</text>
<rect x="1102" y="502" width="5" height="1" fill="#808080"/>
<text x="1108.5" y="507" fill="#ffff00" text-anchor="start" font-size="12.5" stroke="#ffff00" stroke-width="0.12" textLength="18" lengthAdjust="spacingAndGlyphs">131</text>
<rect x="1102" y="489" width="5" height="1" fill="#808080"/>
<text x="1108.5" y="494" fill="#ffff00" text-anchor="start" font-size="12.5" stroke="#ffff00" stroke-width="0.12" textLength="18" lengthAdjust="spacingAndGlyphs">169</text>
<rect x="1102" y="476" width="5" height="1" fill="#808080"/>
<text x="1108.5" y="481" fill="#ffff00" text-anchor="start" font-size="12.5" stroke="#ffff00" stroke-width="0.12" textLength="18" lengthAdjust="spacingAndGlyphs">206</text>
<rect x="1102" y="463" width="5" height="1" fill="#808080"/>
<text x="1108.5" y="468" fill="#ffff00" text-anchor="start" font-size="12.5" stroke="#ffff00" stroke-width="0.12" textLength="18" lengthAdjust="spacingAndGlyphs">244</text>
<rect x="1102" y="450" width="5" height="1" fill="#808080"/>
<text x="1108.5" y="455" fill="#ffff00" text-anchor="start" font-size="12.5" stroke="#ffff00" stroke-width="0.12" textLength="18" lengthAdjust="spacingAndGlyphs">281</text>
<rect x="1102" y="437" width="5" height="1" fill="#808080"/>
<text x="1108.5" y="442" fill="#ffff00" text-anchor="start" font-size="12.5" stroke="#ffff00" stroke-width="0.12" textLength="18" lengthAdjust="spacingAndGlyphs">319</text>
<rect x="1102" y="424" width="5" height="1" fill="#808080"/>
<text x="1108.5" y="429" fill="#ffff00" text-anchor="start" font-size="12.5" stroke="#ffff00" stroke-width="0.12" textLength="18" lengthAdjust="spacingAndGlyphs">356</text>
<rect x="1102" y="411" width="5" height="1" fill="#808080"/>
<text x="1108.5" y="416" fill="#ffff00" text-anchor="start" font-size="12.5" stroke="#ffff00" stroke-width="0.12" textLength="18" lengthAdjust="spacingAndGlyphs">394</text>
<rect x="1102" y="398" width="5" height="1" fill="#808080"/>
<text x="1108.5" y="403" fill="#ffff00" text-anchor="start" font-size="12.5" stroke="#ffff00" stroke-width="0.12" textLength="18" lengthAdjust="spacingAndGlyphs">431</text>
<rect x="1102" y="385" width="5" height="1" fill="#808080"/>
<text x="1108.5" y="390" fill="#ffff00" text-anchor="start" font-size="12.5" stroke="#ffff00" stroke-width="0.12" textLength="18" lengthAdjust="spacingAndGlyphs">468</text>
<rect x="1102" y="372" width="5" height="1" fill="#808080"/>
<text x="1108.5" y="377" fill="#ffff00" text-anchor="start" font-size="12.5" stroke="#ffff00" stroke-width="0.12" textLength="18" lengthAdjust="spacingAndGlyphs">506</text>
<rect x="1102" y="359" width="5" height="1" fill="#808080"/>
<text x="1108.5" y="364" fill="#ffff00" text-anchor="start" font-size="12.5" stroke="#ffff00" stroke-width="0.12" textLength="18" lengthAdjust="spacingAndGlyphs">543</text>
<rect x="1102" y="346" width="5" height="1" fill="#808080"/>
<text x="1108.5" y="351" fill="#ffff00" text-anchor="start" font-size="12.5" stroke="#ffff00" stroke-width="0.12" textLength="18" lengthAdjust="spacingAndGlyphs">581</text>
<rect x="1102" y="333" width="5" height="1" fill="#808080"/>
<text x="1108.5" y="338" fill="#ffff00" text-anchor="start" font-size="12.5" stroke="#ffff00" stroke-width="0.12" textLength="18" lengthAdjust="spacingAndGlyphs">618</text>
<rect x="1102" y="320" width="5" height="1" fill="#808080"/>
<text x="1108.5" y="325" fill="#ffff00" text-anchor="start" font-size="12.5" stroke="#ffff00" stroke-width="0.12" textLength="18" lengthAdjust="spacingAndGlyphs">656</text>
<rect x="1102" y="307" width="5" height="1" fill="#808080"/>
<text x="1108.5" y="312" fill="#ffff00" text-anchor="start" font-size="12.5" stroke="#ffff00" stroke-width="0.12" textLength="18" lengthAdjust="spacingAndGlyphs">693</text>
<rect x="1102" y="294" width="5" height="1" fill="#808080"/>
<text x="1108.5" y="299" fill="#ffff00" text-anchor="start" font-size="12.5" stroke="#ffff00" stroke-width="0.12" textLength="18" lengthAdjust="spacingAndGlyphs">731</text>
<rect x="1102" y="281" width="5" height="1" fill="#808080"/>
<text x="1108.5" y="286" fill="#ffff00" text-anchor="start" font-size="12.5" stroke="#ffff00" stroke-width="0.12" textLength="18" lengthAdjust="spacingAndGlyphs">768</text>
<rect x="1102" y="268" width="5" height="1" fill="#808080"/>
<text x="1108.5" y="273" fill="#ffff00" text-anchor="start" font-size="12.5" stroke="#ffff00" stroke-width="0.12" textLength="18" lengthAdjust="spacingAndGlyphs">806</text>
<rect x="1102" y="255" width="5" height="1" fill="#808080"/>
<text x="1108.5" y="260" fill="#ffff00" text-anchor="start" font-size="12.5" stroke="#ffff00" stroke-width="0.12" textLength="18" lengthAdjust="spacingAndGlyphs">843</text>
<rect x="1102" y="242" width="5" height="1" fill="#808080"/>
<text x="1108.5" y="247" fill="#ffff00" text-anchor="start" font-size="12.5" stroke="#ffff00" stroke-width="0.12" textLength="18" lengthAdjust="spacingAndGlyphs">880</text>
<rect x="1102" y="229" width="5" height="1" fill="#808080"/>
<text x="1108.5" y="234" fill="#ffff00" text-anchor="start" font-size="12.5" stroke="#ffff00" stroke-width="0.12" textLength="18" lengthAdjust="spacingAndGlyphs">918</text>
<rect x="1102" y="216" width="5" height="1" fill="#808080"/>
<text x="1108.5" y="221" fill="#ffff00" text-anchor="start" font-size="12.5" stroke="#ffff00" stroke-width="0.12" textLength="18" lengthAdjust="spacingAndGlyphs">955</text>
<rect x="1102" y="203" width="5" height="1" fill="#808080"/>
<text x="1108.5" y="208" fill="#ffff00" text-anchor="start" font-size="12.5" stroke="#ffff00" stroke-width="0.12" textLength="18" lengthAdjust="spacingAndGlyphs">993</text>
<rect x="1102" y="190" width="5" height="1" fill="#808080"/>
<text x="1108.5" y="195" fill="#ffff00" text-anchor="start" font-size="12.5" stroke="#ffff00" stroke-width="0.12" textLength="24" lengthAdjust="spacingAndGlyphs">1030</text>
<rect x="1102" y="177" width="5" height="1" fill="#808080"/>
<text x="1108.5" y="182" fill="#ffff00" text-anchor="start" font-size="12.5" stroke="#ffff00" stroke-width="0.12" textLength="24" lengthAdjust="spacingAndGlyphs">1068</text>
<rect x="1102" y="164" width="5" height="1" fill="#808080"/>
<text x="1108.5" y="169" fill="#ffff00" text-anchor="start" font-size="12.5" stroke="#ffff00" stroke-width="0.12" textLength="24" lengthAdjust="spacingAndGlyphs">1105</text>
<rect x="1102" y="151" width="5" height="1" fill="#808080"/>
<text x="1108.5" y="156" fill="#ffff00" text-anchor="start" font-size="12.5" stroke="#ffff00" stroke-width="0.12" textLength="24" lengthAdjust="spacingAndGlyphs">1143</text>
<rect x="1102" y="138" width="5" height="1" fill="#808080"/>
<text x="1108.5" y="143" fill="#ffff00" text-anchor="start" font-size="12.5" stroke="#ffff00" stroke-width="0.12" textLength="24" lengthAdjust="spacingAndGlyphs">1180</text>
<rect x="1102" y="125" width="5" height="1" fill="#808080"/>
<text x="1108.5" y="130" fill="#ffff00" text-anchor="start" font-size="12.5" stroke="#ffff00" stroke-width="0.12" textLength="24" lengthAdjust="spacingAndGlyphs">1218</text>
<rect x="1102" y="112" width="5" height="1" fill="#808080"/>
<text x="1108.5" y="117" fill="#ffff00" text-anchor="start" font-size="12.5" stroke="#ffff00" stroke-width="0.12" textLength="24" lengthAdjust="spacingAndGlyphs">1255</text>
<rect x="1102" y="99" width="5" height="1" fill="#808080"/>
<text x="1108.5" y="104" fill="#ffff00" text-anchor="start" font-size="12.5" stroke="#ffff00" stroke-width="0.12" textLength="24" lengthAdjust="spacingAndGlyphs">1292</text>
<rect x="1102" y="86" width="5" height="1" fill="#808080"/>
<text x="1108.5" y="91" fill="#ffff00" text-anchor="start" font-size="12.5" stroke="#ffff00" stroke-width="0.12" textLength="24" lengthAdjust="spacingAndGlyphs">1330</text>
<rect x="1102" y="73" width="5" height="1" fill="#808080"/>
<text x="1108.5" y="78" fill="#ffff00" text-anchor="start" font-size="12.5" stroke="#ffff00" stroke-width="0.12" textLength="24" lengthAdjust="spacingAndGlyphs">1367</text>
<rect x="1098" y="62" width="8" height="1" fill="#808080"/>
<rect x="1098" y="542" width="8" height="1" fill="#808080"/>
<text x="995.5" y="51" fill="#800080" text-anchor="middle" font-size="12.5" stroke="#800080" stroke-width="0.12" textLength="8" lengthAdjust="spacingAndGlyphs">%</text>
<text x="1028.5" y="51" fill="#00ff00" text-anchor="start" font-size="12.5" stroke="#00ff00" stroke-width="0.12" textLength="18.5" lengthAdjust="spacingAndGlyphs">hPa</text>
<text x="1065.5" y="51" fill="#ff8000" text-anchor="start" font-size="12.5" stroke="#ff8000" stroke-width="0.12" textLength="24.5" lengthAdjust="spacingAndGlyphs">km/h</text>
<text x="1102" y="51" fill="#ffff00" text-anchor="start" font-size="12.5" stroke="#ffff00" stroke-width="0.12" textLength="27" lengthAdjust="spacingAndGlyphs">W/m²</text>
<rect x="443" y="538" width="2" height="13" fill="#ffff00"/>
<rect x="606" y="538" width="2" height="13" fill="#808080"/>
<rect x="755" y="538" width="2" height="13" fill="#ffff00"/>
<text x="435.5" y="572" fill="#000" text-anchor="end" font-size="12.5" stroke="#000" stroke-width="0.12" textLength="25" lengthAdjust="spacingAndGlyphs">08:21</text>
<text x="614" y="572" fill="#000" text-anchor="start" font-size="12.5" stroke="#000" stroke-width="0.12" textLength="25" lengthAdjust="spacingAndGlyphs">13:01</text>
<text x="749" y="572" fill="#000" text-anchor="end" font-size="12.5" stroke="#000" stroke-width="0.12" textLength="26" lengthAdjust="spacingAndGlyphs">17:17</text>
<text x="10.5" y="572" fill="#000" text-anchor="start" font-size="12.5" stroke="#000" stroke-width="0.12" textLength="26.5" lengthAdjust="spacingAndGlyphs">08:56</text>
<path d="M40,572 L40,569 L41,569 L41,567 L43,567 L43,565 L47,565 L47,567 L48,567 L48,569 L49,569 L49,572 Z" fill="#ffff00"/>
<rect x="440" y="563" width="9" height="10" fill="#ffffee"/>
<rect x="440" y="564" width="1" height="1" fill="#ffff80"/>
<rect x="447" y="564" width="1" height="1" fill="#ffff80"/>
<rect x="440" y="571" width="1" height="1" fill="#ffff80"/>
<rect x="447" y="571" width="1" height="1" fill="#ffff80"/>
<rect x="448" y="563" width="1" height="1" fill="#ffff80"/>
<rect x="448" y="572" width="1" height="1" fill="#ffff80"/>
<rect x="443" y="562" width="2" height="1" fill="#ffff90"/>
<rect x="443" y="573" width="2" height="1" fill="#ffff90"/>
<rect x="449" y="566" width="1" height="4" fill="#ffff90"/>
<rect x="442" y="564" width="1" height="1" fill="#a8a8c4"/>
<rect x="445" y="564" width="1" height="1" fill="#a8a8c4"/>
<rect x="447" y="566" width="1" height="1" fill="#a8a8c4"/>
<rect x="447" y="569" width="1" height="1" fill="#a8a8c4"/>
<rect x="442" y="571" width="1" height="1" fill="#a8a8c4"/>
<rect x="445" y="571" width="1" height="1" fill="#a8a8c4"/>
<rect x="440" y="566" width="1" height="1" fill="#a8a8c4"/>
<rect x="440" y="569" width="1" height="1" fill="#a8a8c4"/>
<circle cx="444" cy="568" r="3" fill="#ffff00" style="shape-rendering:auto"/>
<rect x="602" y="564" width="1" height="2" fill="#8c8ce0"/>
<rect x="603" y="566" width="1" height="2" fill="#8c8ce0"/>
<rect x="604" y="568" width="1" height="2" fill="#8c8ce0"/>
<rect x="605" y="562" width="2" height="3" fill="#ffff00"/>
<rect x="603" y="564" width="5" height="2" fill="#ffff00"/>
<rect x="604" y="566" width="3" height="2" fill="#ffff00"/>
<rect x="605" y="568" width="1" height="2" fill="#ffff00"/>
<rect x="608" y="564" width="1" height="2" fill="#000"/>
<rect x="607" y="566" width="1" height="2" fill="#000"/>
<rect x="606" y="568" width="1" height="2" fill="#000"/>
<rect x="605" y="570" width="1" height="1" fill="#000"/>
<rect x="607" y="569" width="2" height="1" fill="#2020a0"/>
<rect x="611" y="569" width="2" height="1" fill="#2020a0"/>
<rect x="608" y="570" width="4" height="1" fill="#fff"/>
<rect x="607" y="571" width="6" height="2" fill="#fff"/>
<rect x="753" y="565" width="6" height="6" fill="#ffff50"/>
<circle cx="756" cy="568" r="1.9" fill="#b4b4cc" style="shape-rendering:auto"/>
<rect x="755" y="571" width="2" height="1" fill="#ffffd0"/>
<rect x="0" y="579" width="1144" height="1" fill="#fff"/>
<rect x="0" y="580" width="1" height="90" fill="#fff"/>
<rect x="1" y="580" width="1142" height="90" fill="#0000ff"/>
<rect x="1143" y="580" width="1" height="105" fill="#808080"/>
<rect x="0" y="670" width="1143" height="1" fill="#e8e4d8"/>
<rect x="0" y="671" width="1143" height="1" fill="#ffffff"/>
<rect x="87" y="580" width="1" height="89" fill="#ffffff"/>
<rect x="88" y="580" width="1" height="89" fill="#d4d0c8"/>
<rect x="204" y="580" width="1" height="89" fill="#ffffff"/>
<rect x="205" y="580" width="1" height="89" fill="#d4d0c8"/>
<rect x="322" y="580" width="1" height="89" fill="#ffffff"/>
<rect x="323" y="580" width="1" height="89" fill="#d4d0c8"/>
<rect x="440" y="580" width="1" height="89" fill="#ffffff"/>
<rect x="441" y="580" width="1" height="89" fill="#d4d0c8"/>
<rect x="558" y="580" width="1" height="89" fill="#ffffff"/>
<rect x="559" y="580" width="1" height="89" fill="#d4d0c8"/>
<rect x="676" y="580" width="1" height="89" fill="#ffffff"/>
<rect x="677" y="580" width="1" height="89" fill="#d4d0c8"/>
<rect x="794" y="580" width="1" height="89" fill="#ffffff"/>
<rect x="795" y="580" width="1" height="89" fill="#d4d0c8"/>
<rect x="912" y="580" width="1" height="89" fill="#ffffff"/>
<rect x="913" y="580" width="1" height="89" fill="#d4d0c8"/>
<text x="8.2" y="598" fill="#fff" text-anchor="start" font-size="12.5" font-weight="bold" textLength="36" lengthAdjust="spacingAndGlyphs">Sonde</text>
<text x="8.2" y="614" fill="#fff" text-anchor="start" font-size="12.5" font-weight="bold" textLength="60" lengthAdjust="spacingAndGlyphs">Valeur Min</text>
<text x="8.2" y="630" fill="#fff" text-anchor="start" font-size="12.5" font-weight="bold" textLength="63" lengthAdjust="spacingAndGlyphs">Valeur Max</text>
<text x="8.2" y="646" fill="#fff" text-anchor="start" font-size="12.5" font-weight="bold" textLength="51" lengthAdjust="spacingAndGlyphs">Moyenne</text>
<text x="8.2" y="662" fill="#fff" text-anchor="start" font-size="12.5" font-weight="bold" textLength="76" lengthAdjust="spacingAndGlyphs">11/12/ 00:12</text>
<text x="95" y="598" fill="#fff" text-anchor="start" font-size="12.5" font-weight="bold" textLength="50" lengthAdjust="spacingAndGlyphs">Temp. E.</text>
<text x="198.5" y="598" fill="#fff" text-anchor="end" font-size="12.5" font-weight="bold" textLength="12" lengthAdjust="spacingAndGlyphs">°C</text>
<text x="100" y="614" fill="#fff" text-anchor="start" font-size="12.5" stroke="#fff" stroke-width="0.12" textLength="27" lengthAdjust="spacingAndGlyphs">00:12</text>
<text x="198.5" y="614" fill="#fff" text-anchor="end" font-size="12.5" stroke="#fff" stroke-width="0.12" textLength="21" lengthAdjust="spacingAndGlyphs">11.0</text>
<text x="100" y="630" fill="#fff" text-anchor="start" font-size="12.5" stroke="#fff" stroke-width="0.12" textLength="27" lengthAdjust="spacingAndGlyphs">00:04</text>
<text x="198.5" y="630" fill="#fff" text-anchor="end" font-size="12.5" stroke="#fff" stroke-width="0.12" textLength="21" lengthAdjust="spacingAndGlyphs">11.1</text>
<text x="198.5" y="646" fill="#fff" text-anchor="end" font-size="12.5" stroke="#fff" stroke-width="0.12" textLength="27" lengthAdjust="spacingAndGlyphs">11.04</text>
<text x="97" y="662" fill="#fff" text-anchor="start" font-size="12.5" stroke="#fff" stroke-width="0.12" textLength="37" lengthAdjust="spacingAndGlyphs">H: 94 %</text>
<text x="198.5" y="662" fill="#fff" text-anchor="end" font-size="12.5" font-weight="bold" textLength="24" lengthAdjust="spacingAndGlyphs">11.0</text>
<text x="212" y="598" fill="#fff" text-anchor="start" font-size="12.5" font-weight="bold" textLength="44" lengthAdjust="spacingAndGlyphs">Hum. E.</text>
<text x="316.5" y="598" fill="#fff" text-anchor="end" font-size="12.5" font-weight="bold" textLength="9" lengthAdjust="spacingAndGlyphs">%</text>
<text x="218" y="614" fill="#fff" text-anchor="start" font-size="12.5" stroke="#fff" stroke-width="0.12" textLength="27" lengthAdjust="spacingAndGlyphs">00:12</text>
<text x="316.5" y="614" fill="#fff" text-anchor="end" font-size="12.5" stroke="#fff" stroke-width="0.12" textLength="12" lengthAdjust="spacingAndGlyphs">94</text>
<text x="218" y="630" fill="#fff" text-anchor="start" font-size="12.5" stroke="#fff" stroke-width="0.12" textLength="27" lengthAdjust="spacingAndGlyphs">00:12</text>
<text x="316.5" y="630" fill="#fff" text-anchor="end" font-size="12.5" stroke="#fff" stroke-width="0.12" textLength="12" lengthAdjust="spacingAndGlyphs">94</text>
<text x="316.5" y="646" fill="#fff" text-anchor="end" font-size="12.5" stroke="#fff" stroke-width="0.12" textLength="12" lengthAdjust="spacingAndGlyphs">94</text>
<text x="215" y="662" fill="#fff" text-anchor="start" font-size="12.5" stroke="#fff" stroke-width="0.12" textLength="46" lengthAdjust="spacingAndGlyphs">9.42 g/m³</text>
<text x="316.5" y="662" fill="#fff" text-anchor="end" font-size="12.5" font-weight="bold" textLength="14" lengthAdjust="spacingAndGlyphs">94</text>
<text x="330" y="598" fill="#fff" text-anchor="start" font-size="12.5" font-weight="bold" textLength="42" lengthAdjust="spacingAndGlyphs">P.atmo.</text>
<text x="434.5" y="598" fill="#fff" text-anchor="end" font-size="12.5" font-weight="bold" textLength="22" lengthAdjust="spacingAndGlyphs">hPa</text>
<text x="336" y="614" fill="#fff" text-anchor="start" font-size="12.5" stroke="#fff" stroke-width="0.12" textLength="27" lengthAdjust="spacingAndGlyphs">00:00</text>
<text x="434.5" y="614" fill="#fff" text-anchor="end" font-size="12.5" stroke="#fff" stroke-width="0.12" textLength="33" lengthAdjust="spacingAndGlyphs">1025.9</text>
<text x="336" y="630" fill="#fff" text-anchor="start" font-size="12.5" stroke="#fff" stroke-width="0.12" textLength="27" lengthAdjust="spacingAndGlyphs">00:12</text>
<text x="434.5" y="630" fill="#fff" text-anchor="end" font-size="12.5" stroke="#fff" stroke-width="0.12" textLength="33" lengthAdjust="spacingAndGlyphs">1026.0</text>
<text x="330" y="646" fill="#fff" text-anchor="start" font-size="12.5" stroke="#fff" stroke-width="0.12" textLength="50" lengthAdjust="spacingAndGlyphs">^0.1hPa/h</text>
<text x="434.5" y="646" fill="#fff" text-anchor="end" font-size="12.5" stroke="#fff" stroke-width="0.12" textLength="33" lengthAdjust="spacingAndGlyphs">1026.0</text>
<text x="330" y="662" fill="#fff" text-anchor="start" font-size="12.5" stroke="#fff" stroke-width="0.12" textLength="36" lengthAdjust="spacingAndGlyphs">instable</text>
<text x="434.5" y="662" fill="#fff" text-anchor="end" font-size="12.5" font-weight="bold" textLength="38" lengthAdjust="spacingAndGlyphs">1026.0</text>
<text x="448" y="598" fill="#fff" text-anchor="start" font-size="12.5" font-weight="bold" textLength="26" lengthAdjust="spacingAndGlyphs">Vent</text>
<text x="552.5" y="598" fill="#fff" text-anchor="end" font-size="12.5" font-weight="bold" textLength="30" lengthAdjust="spacingAndGlyphs">km/h</text>
<text x="448" y="614" fill="#fff" text-anchor="start" font-size="12.5" stroke="#fff" stroke-width="0.12" textLength="45" lengthAdjust="spacingAndGlyphs">Ø 10 min.</text>
<text x="552.5" y="614" fill="#fff" text-anchor="end" font-size="12.5" stroke="#fff" stroke-width="0.12" textLength="15" lengthAdjust="spacingAndGlyphs">0.0</text>
<text x="454" y="630" fill="#fff" text-anchor="start" font-size="12.5" stroke="#fff" stroke-width="0.12" textLength="27" lengthAdjust="spacingAndGlyphs">00:12</text>
<text x="552.5" y="630" fill="#fff" text-anchor="end" font-size="12.5" stroke="#fff" stroke-width="0.12" textLength="44" lengthAdjust="spacingAndGlyphs">O-SO 0.0</text>
<text x="454" y="646" fill="#fff" text-anchor="start" font-size="12.5" stroke="#fff" stroke-width="0.12" textLength="32" lengthAdjust="spacingAndGlyphs">0.0 km</text>
<text x="552.5" y="646" fill="#fff" text-anchor="end" font-size="12.5" stroke="#fff" stroke-width="0.12" textLength="15" lengthAdjust="spacingAndGlyphs">0.0</text>
<text x="454" y="662" fill="#fff" text-anchor="start" font-size="12.5" stroke="#fff" stroke-width="0.12" textLength="51" lengthAdjust="spacingAndGlyphs">0 Bft O-SO</text>
<text x="552.5" y="662" fill="#fff" text-anchor="end" font-size="12.5" font-weight="bold" textLength="17" lengthAdjust="spacingAndGlyphs">0.0</text>
<text x="566" y="598" fill="#fff" text-anchor="start" font-size="12.5" font-weight="bold" textLength="43" lengthAdjust="spacingAndGlyphs">Rafales</text>
<text x="670.5" y="598" fill="#fff" text-anchor="end" font-size="12.5" font-weight="bold" textLength="30" lengthAdjust="spacingAndGlyphs">km/h</text>
<text x="566" y="614" fill="#fff" text-anchor="start" font-size="12.5" stroke="#fff" stroke-width="0.12" textLength="45" lengthAdjust="spacingAndGlyphs">Ø 10 min.</text>
<text x="670.5" y="614" fill="#fff" text-anchor="end" font-size="12.5" stroke="#fff" stroke-width="0.12" textLength="15" lengthAdjust="spacingAndGlyphs">0.0</text>
<text x="572" y="630" fill="#fff" text-anchor="start" font-size="12.5" stroke="#fff" stroke-width="0.12" textLength="27" lengthAdjust="spacingAndGlyphs">00:12</text>
<text x="670.5" y="630" fill="#fff" text-anchor="end" font-size="12.5" stroke="#fff" stroke-width="0.12" textLength="25" lengthAdjust="spacingAndGlyphs">E 0.0</text>
<text x="572" y="646" fill="#fff" text-anchor="start" font-size="12.5" stroke="#fff" stroke-width="0.12" textLength="32" lengthAdjust="spacingAndGlyphs">0.0 km</text>
<text x="670.5" y="646" fill="#fff" text-anchor="end" font-size="12.5" stroke="#fff" stroke-width="0.12" textLength="15" lengthAdjust="spacingAndGlyphs">0.0</text>
<text x="572" y="662" fill="#fff" text-anchor="start" font-size="12.5" stroke="#fff" stroke-width="0.12" textLength="32" lengthAdjust="spacingAndGlyphs">0 Bft E</text>
<text x="670.5" y="662" fill="#fff" text-anchor="end" font-size="12.5" font-weight="bold" textLength="17" lengthAdjust="spacingAndGlyphs">0.0</text>
<text x="684" y="598" fill="#fff" text-anchor="start" font-size="12.5" font-weight="bold" textLength="70" lengthAdjust="spacingAndGlyphs">Pluie/Rosée</text>
<text x="788.5" y="598" fill="#fff" text-anchor="end" font-size="12.5" font-weight="bold" textLength="20" lengthAdjust="spacingAndGlyphs">mm</text>
<text x="684" y="614" fill="#fff" text-anchor="start" font-size="12.5" stroke="#fff" stroke-width="0.12" textLength="28" lengthAdjust="spacingAndGlyphs">0 min.</text>
<text x="690" y="630" fill="#fff" text-anchor="start" font-size="12.5" stroke="#fff" stroke-width="0.12" textLength="27" lengthAdjust="spacingAndGlyphs">00:12</text>
<text x="788.5" y="630" fill="#fff" text-anchor="end" font-size="12.5" stroke="#fff" stroke-width="0.12" textLength="15" lengthAdjust="spacingAndGlyphs">0.0</text>
<text x="684" y="646" fill="#fff" text-anchor="start" font-size="12.5" stroke="#fff" stroke-width="0.12" textLength="27" lengthAdjust="spacingAndGlyphs">Total:</text>
<text x="788.5" y="646" fill="#fff" text-anchor="end" font-size="12.5" stroke="#fff" stroke-width="0.12" textLength="15" lengthAdjust="spacingAndGlyphs">0.0</text>
<text x="687" y="662" fill="#fff" text-anchor="start" font-size="12.5" stroke="#fff" stroke-width="0.12" textLength="34" lengthAdjust="spacingAndGlyphs">0.0 mm</text>
<text x="788.5" y="662" fill="#fff" text-anchor="end" font-size="12.5" font-weight="bold" textLength="17" lengthAdjust="spacingAndGlyphs">0.0</text>
<text x="802" y="598" fill="#fff" text-anchor="start" font-size="12.5" font-weight="bold" textLength="72" lengthAdjust="spacingAndGlyphs">Heures Enso</text>
<text x="906.5" y="598" fill="#fff" text-anchor="end" font-size="12.5" font-weight="bold" textLength="20" lengthAdjust="spacingAndGlyphs">min</text>
<text x="808" y="630" fill="#fff" text-anchor="start" font-size="12.5" stroke="#fff" stroke-width="0.12" textLength="27" lengthAdjust="spacingAndGlyphs">00:12</text>
<text x="906.5" y="630" fill="#fff" text-anchor="end" font-size="12.5" stroke="#fff" stroke-width="0.12" textLength="6" lengthAdjust="spacingAndGlyphs">0</text>
<text x="802" y="646" fill="#fff" text-anchor="start" font-size="12.5" stroke="#fff" stroke-width="0.12" textLength="28" lengthAdjust="spacingAndGlyphs">0 min.</text>
<text x="906.5" y="646" fill="#fff" text-anchor="end" font-size="12.5" stroke="#fff" stroke-width="0.12" textLength="6" lengthAdjust="spacingAndGlyphs">0</text>
<text x="906.5" y="662" fill="#fff" text-anchor="end" font-size="12.5" font-weight="bold" textLength="7" lengthAdjust="spacingAndGlyphs">0</text>
<text x="921" y="598" fill="#fff" text-anchor="start" font-size="12.5" font-weight="bold" textLength="40" lengthAdjust="spacingAndGlyphs">T Pluie</text>
<text x="1022" y="598" fill="#fff" text-anchor="end" font-size="12.5" font-weight="bold" textLength="20" lengthAdjust="spacingAndGlyphs">min</text>
<text x="926" y="614" fill="#fff" text-anchor="start" font-size="12.5" stroke="#fff" stroke-width="0.12" textLength="27" lengthAdjust="spacingAndGlyphs">00:12</text>
<text x="1022" y="614" fill="#fff" text-anchor="end" font-size="12.5" stroke="#fff" stroke-width="0.12" textLength="6" lengthAdjust="spacingAndGlyphs">0</text>
<text x="926" y="630" fill="#fff" text-anchor="start" font-size="12.5" stroke="#fff" stroke-width="0.12" textLength="27" lengthAdjust="spacingAndGlyphs">00:12</text>
<text x="1022" y="630" fill="#fff" text-anchor="end" font-size="12.5" stroke="#fff" stroke-width="0.12" textLength="6" lengthAdjust="spacingAndGlyphs">0</text>
<text x="920" y="646" fill="#fff" text-anchor="start" font-size="12.5" stroke="#fff" stroke-width="0.12" textLength="28" lengthAdjust="spacingAndGlyphs">0 min.</text>
<text x="1022" y="646" fill="#fff" text-anchor="end" font-size="12.5" stroke="#fff" stroke-width="0.12" textLength="6" lengthAdjust="spacingAndGlyphs">0</text>
<text x="1022" y="662" fill="#fff" text-anchor="end" font-size="12.5" font-weight="bold" textLength="7" lengthAdjust="spacingAndGlyphs">0</text>
<rect x="0" y="672" width="1143" height="13" fill="#f0f0f0"/>
<rect x="1" y="672" width="606" height="2" fill="#a0a0a0"/>
<rect x="1" y="672" width="2" height="13" fill="#a0a0a0"/>
<rect x="607" y="672" width="2" height="13" fill="#fff"/>
<rect x="609" y="672" width="194" height="2" fill="#a0a0a0"/>
<rect x="609" y="672" width="2" height="13" fill="#a0a0a0"/>
<rect x="803" y="672" width="2" height="13" fill="#fff"/>
<rect x="805" y="672" width="171" height="2" fill="#a0a0a0"/>
<rect x="805" y="672" width="2" height="13" fill="#a0a0a0"/>
<rect x="976" y="672" width="2" height="13" fill="#fff"/>
<rect x="978" y="672" width="41" height="2" fill="#a0a0a0"/>
<rect x="978" y="672" width="2" height="13" fill="#a0a0a0"/>
<rect x="1019" y="672" width="2" height="13" fill="#fff"/>
<rect x="1021" y="672" width="53" height="2" fill="#a0a0a0"/>
<rect x="1021" y="672" width="2" height="13" fill="#a0a0a0"/>
<rect x="1074" y="672" width="2" height="13" fill="#fff"/>
<rect x="1076" y="672" width="65" height="2" fill="#a0a0a0"/>
<rect x="1076" y="672" width="2" height="13" fill="#a0a0a0"/>
<rect x="1141" y="672" width="2" height="13" fill="#fff"/>
<text x="6.7" y="686" fill="#000" text-anchor="start" font-size="12.5" stroke="#000" stroke-width="0.12" textLength="26.5" lengthAdjust="spacingAndGlyphs">00:00</text>
<text x="603.3" y="686" fill="#000" text-anchor="end" font-size="12.5" stroke="#000" stroke-width="0.12" textLength="39.5" lengthAdjust="spacingAndGlyphs">00:12:01</text>
<text x="614.3" y="686" fill="#000" text-anchor="start" font-size="12.5" stroke="#000" stroke-width="0.12" textLength="86" lengthAdjust="spacingAndGlyphs">jeudi, 11/12/2025</text>
<text x="807.3" y="686" fill="#000" text-anchor="start" font-size="12.5" stroke="#000" stroke-width="0.12" textLength="119" lengthAdjust="spacingAndGlyphs">VANTAGE PRO 2 trouvé</text>
<text x="983.5" y="686" fill="#000" text-anchor="start" font-size="12.5" stroke="#000" stroke-width="0.12" textLength="33" lengthAdjust="spacingAndGlyphs">COM 4</text>
<text x="1034.5" y="686" fill="#000" text-anchor="start" font-size="12.5" stroke="#000" stroke-width="0.12" textLength="25.5" lengthAdjust="spacingAndGlyphs">00:11</text>
<text x="1081" y="686" fill="#000" text-anchor="start" font-size="12.5" stroke="#000" stroke-width="0.12" textLength="58" lengthAdjust="spacingAndGlyphs">11/12/2025</text>
<svg x="1144" y="0" width="8" height="685" viewBox="1144 0 8 685" overflow="hidden">
<text x="1144" y="42" fill="#800080" text-anchor="start" font-size="12.5" stroke="#800080" stroke-width="0.12" textLength="9" lengthAdjust="spacingAndGlyphs">:e</text>
<rect x="1144" y="47" width="8" height="2" fill="#808080"/>
<rect x="1147" y="70" width="3" height="1" fill="#808080"/>
<rect x="1147" y="93" width="3" height="1" fill="#808080"/>
<rect x="1147" y="116" width="3" height="1" fill="#808080"/>
<rect x="1147" y="138" width="3" height="1" fill="#808080"/>
<rect x="1147" y="161" width="3" height="1" fill="#808080"/>
<rect x="1147" y="183" width="3" height="1" fill="#808080"/>
<rect x="1147" y="206" width="3" height="1" fill="#808080"/>
<rect x="1147" y="228" width="3" height="1" fill="#808080"/>
<rect x="1147" y="250" width="3" height="1" fill="#808080"/>
<rect x="1147" y="273" width="3" height="1" fill="#808080"/>
<rect x="1147" y="296" width="3" height="1" fill="#808080"/>
<rect x="1147" y="318" width="3" height="1" fill="#808080"/>
<rect x="1147" y="340" width="3" height="1" fill="#808080"/>
<rect x="1147" y="363" width="3" height="1" fill="#808080"/>
<rect x="1147" y="386" width="3" height="1" fill="#808080"/>
<rect x="1147" y="408" width="3" height="1" fill="#808080"/>
<rect x="1147" y="431" width="3" height="1" fill="#808080"/>
<rect x="1147" y="453" width="3" height="1" fill="#808080"/>
<rect x="1147" y="476" width="3" height="1" fill="#808080"/>
<rect x="1144" y="234" width="5" height="1" fill="#00ff00"/>
<rect x="1144" y="497" width="8" height="2" fill="#808080"/>
<rect x="1144" y="535" width="8" height="1" fill="#fff"/>
<rect x="1144" y="536" width="8" height="90" fill="#0000ff"/>
<rect x="1144" y="626" width="8" height="2" fill="#a0a0a0"/>
<rect x="1144" y="628" width="8" height="18" fill="#f0f0f0"/>
<text x="1142" y="642" fill="#000" text-anchor="start" font-size="12.5" stroke="#000" stroke-width="0.12" textLength="7" lengthAdjust="spacingAndGlyphs">é</text>
<rect x="1144" y="646" width="8" height="1" fill="#a0a0a0"/>
<rect x="1144" y="647" width="8" height="10" fill="#fff"/>
<rect x="1144" y="657" width="8" height="28" fill="#000"/>
</svg>
</svg>
</body></html>
